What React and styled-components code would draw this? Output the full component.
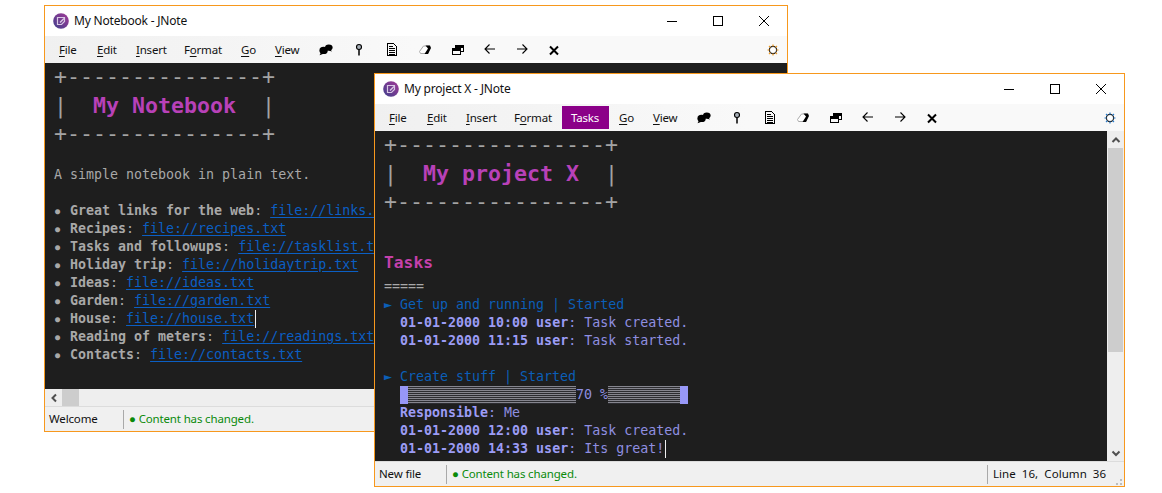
import styled, { createGlobalStyle } from "styled-components";

const GlobalStyle = createGlobalStyle`
  html, body { margin: 0; padding: 0; background: #fff; }
  * { box-sizing: border-box; }
`;

const uiFont = `"Noto Sans", "Open Sans", sans-serif`;

const Desktop = styled.div`
  position: relative;
  width: 1162px;
  height: 493px;
  overflow: hidden;
  background: #fff;
`;

const Window = styled.div`
  position: absolute;
  left: ${(p) => p.$left}px;
  top: ${(p) => p.$top}px;
  width: ${(p) => p.$width}px;
  height: ${(p) => p.$height}px;
  display: flex;
  flex-direction: column;
  border: 1px solid #f7981d;
  background: #fff;
  overflow: hidden;
  font-family: ${uiFont};
`;

const TitleBar = styled.div`
  height: 30px;
  flex: none;
  display: flex;
  align-items: center;
  padding-left: 8px;
  background: #fff;
`;

const TitleText = styled.span`
  margin-left: 5px;
  padding-bottom: 2px;
  font-size: 12px;
  letter-spacing: -0.2px;
  color: #111;
  flex: 1;
`;

const WinControls = styled.div`
  display: flex;
  height: 100%;
`;

const WinButton = styled.div`
  width: 46px;
  height: 100%;
  display: flex;
  align-items: center;
  justify-content: center;
`;

const MenuBar = styled.div`
  height: 27px;
  flex: none;
  display: flex;
  align-items: center;
  padding: 0 4px;
  background: linear-gradient(90deg, #f0f0f0, #f9f9f9 50%, #f9f9f9);
`;

const MenuItem = styled.div`
  width: ${(p) => p.$width}px;
  height: 23px;
  flex: none;
  margin-left: ${(p) => (p.$active ? 1 : 0)}px;
  padding-left: ${(p) => (p.$active ? 9 : 10)}px;
  display: flex;
  align-items: center;
  font-size: 11.5px;
  letter-spacing: -0.2px;
  color: ${(p) => (p.$active ? "#fff" : "#111")};
  background: ${(p) => (p.$active ? "#8b0088" : "transparent")};
  u { text-underline-offset: 2px; }
`;

const ToolButton = styled.div`
  width: ${(p) => p.$width || 33}px;
  height: 23px;
  flex: none;
  display: flex;
  align-items: center;
  justify-content: center;
`;

const Spacer = styled.div`
  flex: 1;
`;

const Body = styled.div`
  flex: 1;
  min-height: 0;
  display: flex;
`;

const Editor = styled.div`
  flex: 1;
  min-width: 0;
  overflow: hidden;
  padding-left: 9px;
  background: #1e1e1e;
  font-family: "DejaVu Sans Mono", monospace;
  font-size: 13.3px;
  color: #a8a8a8;
`;

const Line = styled.div`
  height: 18px;
  line-height: 18px;
  white-space: pre;
`;

const RuleLine = styled(Line)`
  height: 19px;
  line-height: 20px;
`;

const FrameLine = styled(Line)`
  height: 28.4px;
  line-height: 28.4px;
  font-size: 21.6px;
  color: #a4a4a4;
`;

const FrameTitleLine = styled(FrameLine)`
  line-height: 30.4px;
`;

const BigTitle = styled.span`
  font-weight: bold;
  color: #b841b8;
`;

const SectionLine = styled(Line)`
  height: 25px;
  line-height: 21px;
  font-size: 16.3px;
  font-weight: bold;
  color: #c540ab;
`;

const Bullet = styled.span`
  display: inline-block;
  width: 16px;
  padding-left: 1px;
  font-size: 8.5px;
  line-height: 18px;
  vertical-align: top;
  color: #a8a8a8;
`;

const Label = styled.b`
  color: #a8a8a8;
`;

const FileLink = styled.span`
  color: #0b5fc4;
  text-decoration: underline;
  text-underline-offset: 2px;
`;

const TaskLine = styled(Line)`
  color: #0b5fb8;
`;

const LogLine = styled(Line)`
  color: #8f8fe0;
  b { color: #9c9cf5; }
`;

const ProgressLine = styled(LogLine)`
  display: flex;
  padding-left: 16px;
`;

const ProgressEnd = styled.span`
  width: 8px;
  height: 18px;
  flex: none;
  background: #9797f7;
`;

const ProgressFill = styled.span`
  width: ${(p) => p.$chars * 8}px;
  height: 18px;
  flex: none;
  background: repeating-linear-gradient(180deg, #85858e 0 1px, #2c2c30 1px 2px);
`;

const Caret = styled.span`
  display: inline-block;
  width: 1px;
  height: 18px;
  vertical-align: top;
  margin-left: 1px;
  background: #f0f0f0;
`;

const VScroll = styled.div`
  width: 17px;
  flex: none;
  display: flex;
  flex-direction: column;
  background: #eee;
`;

const HScroll = styled.div`
  height: 17px;
  flex: none;
  display: flex;
  background: #eee;
`;

const ScrollArrow = styled.div`
  width: 17px;
  height: 17px;
  flex: none;
  display: flex;
  align-items: center;
  justify-content: center;
`;

const VThumb = styled.div`
  height: ${(p) => p.$size}px;
  flex: none;
  margin: 0 1px;
  background: #cdcdcd;
`;

const HThumb = styled.div`
  width: ${(p) => p.$size}px;
  flex: none;
  background: #cdcdcd;
`;

const StatusBar = styled.div`
  height: 25px;
  flex: none;
  display: flex;
  align-items: center;
  background: #f0f0f0;
  border-top: 1px solid #dcdcdc;
  font-size: 11.5px;
  letter-spacing: -0.15px;
  color: #111;
`;

const StatusCell = styled.div`
  width: ${(p) => (p.$width ? `${p.$width}px` : "auto")};
  flex: ${(p) => (p.$width ? "none" : 1)};
  height: 19px;
  display: flex;
  align-items: center;
  padding-left: ${(p) => (p.$divided ? 5 : 4)}px;
  padding-bottom: 2px;
  border-left: ${(p) => (p.$divided ? "1px solid #a9a9a9" : "none")};
  white-space: pre;
`;

const PositionCell = styled(StatusCell)`
  letter-spacing: 0.05px;
`;

const ChangedText = styled.span`
  color: #0a8a0a;
`;

const Grip = styled.div`
  position: absolute;
  right: 1px;
  bottom: 1px;
  width: 12px;
  height: 12px;
`;

const Stroke = styled.svg`
  display: block;
  fill: none;
  stroke: ${(p) => p.$color || "#000"};
  shape-rendering: ${(p) => (p.$crisp ? "crispEdges" : "auto")};
`;

const AppIcon = () => (
  <svg width="16" height="16" viewBox="0 0 16 16" style={{ flex: "none" }}>
    <defs>
      <linearGradient id="jnoteBg" x1="0" y1="1" x2="1" y2="0">
        <stop offset="0" stopColor="#3f3f8c" />
        <stop offset="1" stopColor="#a33a96" />
      </linearGradient>
    </defs>
    <circle cx="8" cy="8" r="7.8" fill="url(#jnoteBg)" />
    <path d="M4.5 4.5h7v4l-3 3h-4z" fill="none" stroke="#d8c8e4" strokeWidth="1.2" />
    <path d="M7 9.5l4-4" stroke="#d8c8e4" strokeWidth="1.4" />
  </svg>
);

const MinIcon = () => (
  <Stroke width="10" height="10" viewBox="0 0 10 10" $crisp>
    <path d="M0 5.5h10" />
  </Stroke>
);
const MaxIcon = () => (
  <Stroke width="10" height="10" viewBox="0 0 10 10" $crisp>
    <rect x="0.5" y="0.5" width="9" height="9" />
  </Stroke>
);
const CloseIcon = () => (
  <Stroke width="10" height="10" viewBox="0 0 10 10">
    <path d="M0 0l10 10M10 0L0 10" strokeWidth="1" />
  </Stroke>
);

const ChatIcon = () => (
  <svg width="16" height="16" viewBox="0 0 16 16">
    <ellipse cx="5.6" cy="8.4" rx="4.2" ry="3.6" fill="#000" />
    <path d="M3 10.5l-1.5 2.7 4-1.5z" fill="#000" />
    <ellipse cx="10.8" cy="5.6" rx="3.8" ry="3.1" fill="#000" />
    <path d="M12.5 7.5l1.5 2-3.5-1z" fill="#000" />
  </svg>
);
const PinIcon = () => (
  <Stroke width="16" height="16" viewBox="0 0 16 16" strokeWidth="1.1">
    <circle cx="8" cy="5" r="2.5" fill="#a8b0b8" />
    <path d="M8 7.5v6" strokeWidth="1.5" />
  </Stroke>
);
const DocIcon = () => (
  <Stroke width="16" height="16" viewBox="0 0 16 16" strokeWidth="1" $crisp>
    <path d="M3.5 1.5h6l3 3v9h-9z" />
    <path d="M5 4.5h4M5 6.5h6M5 8.5h6M5 10.5h6M5 12.5h6" />
  </Stroke>
);
const EraserIcon = () => (
  <svg width="16" height="16" viewBox="0 0 16 16">
    <path d="M6.5 4h6l-1.5 7.5H3.5L2.5 9.5z" fill="#fff" stroke="#aaa" strokeWidth="1" />
    <path d="M8.5 3.5h4.5l1 2.5-3 6H7.5l3.5-5.5z" fill="#000" />
  </svg>
);
const WindowsIcon = () => (
  <Stroke width="16" height="16" viewBox="0 0 16 16" strokeWidth="1" $crisp>
    <path d="M5.5 5.5v-2h8v6h-3" />
    <path d="M5.5 4.5h8" strokeWidth="2" />
    <rect x="2.5" y="6.5" width="8" height="6" />
    <path d="M2.5 7.5h8" strokeWidth="2" />
  </Stroke>
);
const BackIcon = () => (
  <Stroke width="16" height="16" viewBox="0 0 16 16" strokeWidth="1.1">
    <path d="M13 7H3M7.5 2.5L3 7l4.5 4.5" />
  </Stroke>
);
const ForwardIcon = () => (
  <Stroke width="16" height="16" viewBox="0 0 16 16" strokeWidth="1.1">
    <path d="M3 7h10M8.5 2.5L13 7l-4.5 4.5" />
  </Stroke>
);
const CrossIcon = () => (
  <Stroke width="16" height="16" viewBox="0 0 16 16" strokeWidth="2">
    <path d="M4 4.5l8 8M12 4.5l-8 8" />
  </Stroke>
);
const GearIcon = ({ accent }) => (
  <svg width="12" height="12" viewBox="0 0 12 12">
    <circle cx="6" cy="6" r="3.6" fill="#fff" stroke="#222" strokeWidth="1.2" />
    <path d="M6 0.5v2M6 9.5v2M0.5 6h2M9.5 6h2M2 2l1.4 1.4M8.6 8.6L10 10M10 2L8.6 3.4M3.4 8.6L2 10" stroke={accent} strokeWidth="1.2" />
  </svg>
);
const Chevron = ({ dir }) => {
  const d = {
    up: "M1.5 7L5 3.5 8.5 7",
    down: "M1.5 3.5L5 7 8.5 3.5",
    left: "M7 1.5L3.5 5 7 8.5",
  }[dir];
  return (
    <Stroke width="10" height="10" viewBox="0 0 10 10" $color="#505050" strokeWidth="2">
      <path d={d} />
    </Stroke>
  );
};

const Title = ({ children }) => (
  <>
    <AppIcon />
    <TitleText>{children}</TitleText>
    <WinControls>
      <WinButton><MinIcon /></WinButton>
      <WinButton><MaxIcon /></WinButton>
      <WinButton><CloseIcon /></WinButton>
    </WinControls>
  </>
);

const Menu = ({ tasks, accent }) => (
  <MenuBar>
    <MenuItem $width={38}><span><u>F</u>ile</span></MenuItem>
    <MenuItem $width={39}><span><u>E</u>dit</span></MenuItem>
    <MenuItem $width={48}><span><u>I</u>nsert</span></MenuItem>
    <MenuItem $width={57}><span>F<u>o</u>rmat</span></MenuItem>
    {tasks && <MenuItem $active $width={47}>Tasks</MenuItem>}
    <MenuItem $width={34}><span><u>G</u>o</span></MenuItem>
    <MenuItem $width={44}><span><u>V</u>iew</span></MenuItem>
    <ToolButton><ChatIcon /></ToolButton>
    <ToolButton><PinIcon /></ToolButton>
    <ToolButton><DocIcon /></ToolButton>
    <ToolButton><EraserIcon /></ToolButton>
    <ToolButton><WindowsIcon /></ToolButton>
    <ToolButton $width={32}><BackIcon /></ToolButton>
    <ToolButton $width={31}><ForwardIcon /></ToolButton>
    <ToolButton><CrossIcon /></ToolButton>
    <Spacer />
    <ToolButton $width={20}><GearIcon accent={accent} /></ToolButton>
  </MenuBar>
);

const Frame = ({ name, dashes }) => (
  <>
    <FrameLine>{"+" + "-".repeat(dashes) + "+"}</FrameLine>
    <FrameTitleLine>{"|  "}<BigTitle>{name}</BigTitle>{"  |"}</FrameTitleLine>
    <FrameLine>{"+" + "-".repeat(dashes) + "+"}</FrameLine>
  </>
);

const notebookLinks = [
  ["Great links for the web", "file://links.txt"],
  ["Recipes", "file://recipes.txt"],
  ["Tasks and followups", "file://tasklist.txt"],
  ["Holiday trip", "file://holidaytrip.txt"],
  ["Ideas", "file://ideas.txt"],
  ["Garden", "file://garden.txt"],
  ["House", "file://house.txt"],
  ["Reading of meters", "file://readings.txt"],
  ["Contacts", "file://contacts.txt"],
];

const Log = ({ stamp, children }) => (
  <LogLine>{"  "}<b>{stamp} user</b>: {children}</LogLine>
);

export default function App() {
  return (
    <Desktop>
      <GlobalStyle />
      <Window $left={44} $top={5} $width={744} $height={427}>
        <TitleBar><Title>My Notebook - JNote</Title></TitleBar>
        <Menu accent="#f09a20" />
        <Body>
          <Editor>
            <Frame name="My Notebook" dashes={15} />
            <Line> </Line>
            <Line>A simple notebook in plain text.</Line>
            <Line> </Line>
            {notebookLinks.map(([label, href]) => (
              <Line key={label}>
                <Bullet>●</Bullet><Label>{label}</Label>: <FileLink>{href}</FileLink>
                {label === "House" && <Caret />}
              </Line>
            ))}
          </Editor>
        </Body>
        <HScroll>
          <ScrollArrow><Chevron dir="left" /></ScrollArrow>
          <HThumb $size={17} />
        </HScroll>
        <StatusBar>
          <StatusCell $width={78}>Welcome</StatusCell>
          <StatusCell $divided><ChangedText>● Content has changed.</ChangedText></StatusCell>
        </StatusBar>
      </Window>

      <Window $left={374} $top={73} $width={751} $height={414}>
        <TitleBar><Title>My project X - JNote</Title></TitleBar>
        <Menu tasks accent="#2a7fd0" />
        <Body>
          <Editor>
            <Frame name="My project X" dashes={16} />
            <Line> </Line>
            <Line> </Line>
            <SectionLine>Tasks</SectionLine>
            <RuleLine>=====</RuleLine>
            <TaskLine>► Get up and running | Started</TaskLine>
            <Log stamp="01-01-2000 10:00">Task created.</Log>
            <Log stamp="01-01-2000 11:15">Task started.</Log>
            <Line> </Line>
            <TaskLine>► Create stuff | Started</TaskLine>
            <ProgressLine>
              <ProgressEnd />
              <ProgressFill $chars={21} />
              70 %
              <ProgressFill $chars={9} />
              <ProgressEnd />
            </ProgressLine>
            <LogLine>{"  "}<b>Responsible</b>: Me</LogLine>
            <Log stamp="01-01-2000 12:00">Task created.</Log>
            <Log stamp="01-01-2000 14:33">Its great!<Caret /></Log>
          </Editor>
          <VScroll>
            <ScrollArrow><Chevron dir="up" /></ScrollArrow>
            <VThumb $size={204} />
            <Spacer />
            <ScrollArrow><Chevron dir="down" /></ScrollArrow>
          </VScroll>
        </Body>
        <StatusBar>
          <StatusCell $width={71}>New file</StatusCell>
          <StatusCell $divided><ChangedText>● Content has changed.</ChangedText></StatusCell>
          <PositionCell $width={137} $divided>Line  16,  Column  36</PositionCell>
        </StatusBar>
        <Grip>
          <svg width="12" height="12" viewBox="0 0 12 12">
            <path d="M9 1h2v2H9zM5 5h2v2H5zM9 5h2v2H9zM1 9h2v2H1zM5 9h2v2H5zM9 9h2v2H9z" fill="#bdbdbd" />
          </svg>
        </Grip>
      </Window>
    </Desktop>
  );
}
